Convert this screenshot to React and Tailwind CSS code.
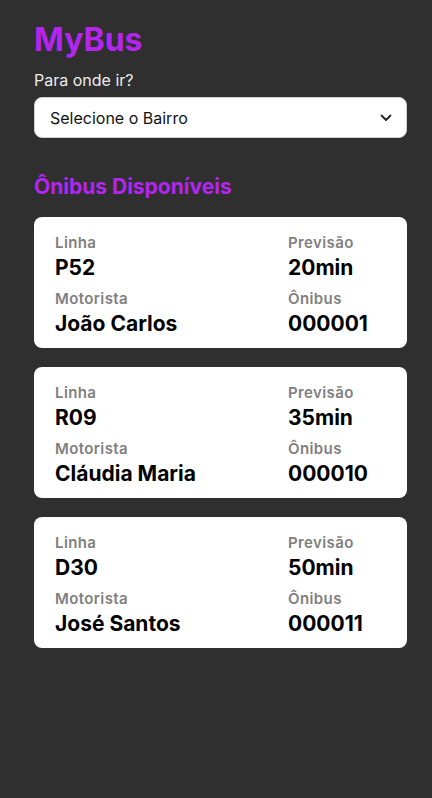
import React from "react";

const buses = [
  { linha: "P52", previsao: "20min", motorista: "João Carlos", onibus: "000001" },
  { linha: "R09", previsao: "35min", motorista: "Cláudia Maria", onibus: "000010" },
  { linha: "D30", previsao: "50min", motorista: "José Santos", onibus: "000011" },
];

function Field({ label, value, top }) {
  return (
    <div className={"flex flex-col " + (top ? "" : "mt-[8px]")}>
      <span className="text-[15px] leading-[20px] font-semibold tracking-[0.4px] text-[#7f7f7f]">{label}</span>
      <span className="mt-[2px] text-[21px] leading-[26px] font-bold text-black">{value}</span>
    </div>
  );
}

export default function App() {
  return (
    <div
      className="min-h-[798px] w-full bg-[#2f2f2f] pl-[34px] pr-[25px] pt-[20px] pb-10"
      style={{ fontFamily: "Inter, 'Noto Sans', sans-serif" }}
    >
      <h1 className="text-[32px] leading-[40px] font-bold text-[#b425f0]">MyBus</h1>
      <p className="mt-[10px] text-[16px] leading-[20px] text-[#ececec]">Para onde ir?</p>
      <div className="mt-[7px] flex h-[41px] items-center justify-between rounded-[8px] border border-[#d0d0d0] bg-white pl-[15px] pr-[14px]">
        <span className="text-[16px] text-[#111]">Selecione o Bairro</span>
        <svg width="12" height="8" viewBox="0 0 12 8" fill="none">
          <path d="M1.5 1.5L6 6L10.5 1.5" stroke="#222" strokeWidth="1.8" strokeLinecap="round" strokeLinejoin="round" />
        </svg>
      </div>
      <h2 className="mt-[36px] text-[21px] leading-[26px] font-bold text-[#b425f0]">Ônibus Disponíveis</h2>
      <div className="mt-[17px] flex flex-col gap-[19px]">
        {buses.map((b) => (
          <div key={b.linha} className="grid grid-cols-[233px_1fr] rounded-[8px] bg-white px-[21px] pt-[16px] pb-[11px]">
            <div className="flex flex-col">
              <Field top label="Linha" value={b.linha} />
              <Field label="Motorista" value={b.motorista} />
            </div>
            <div className="flex flex-col">
              <Field top label="Previsão" value={b.previsao} />
              <Field label="Ônibus" value={b.onibus} />
            </div>
          </div>
        ))}
      </div>
    </div>
  );
}
